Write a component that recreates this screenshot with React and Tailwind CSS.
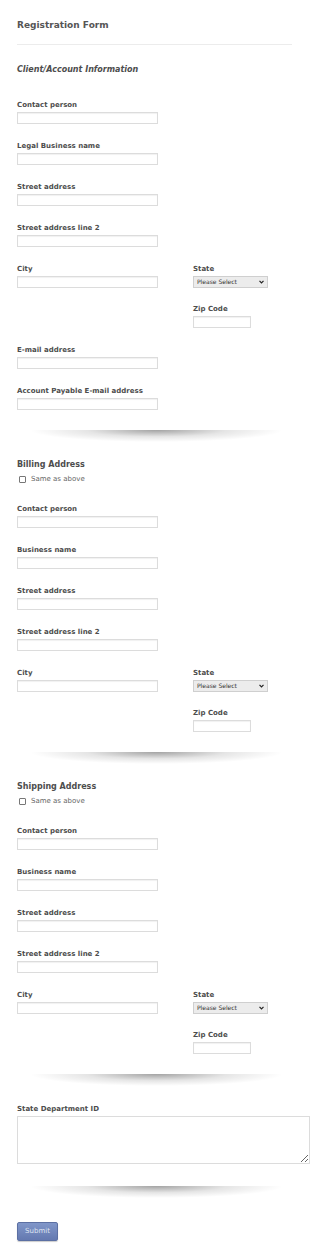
import React from 'react';

const font = { fontFamily: '"DejaVu Sans", Verdana, sans-serif' };

const Label = ({ children }) => (
  <div className="h-[10px] leading-[10px] text-[7px] font-bold text-[#4d4d4d] whitespace-nowrap mb-[2px]">{children}</div>
);

const TextInput = ({ w = 'w-[141px]' }) => (
  <input type="text" className={`block ${w} h-[12px] border border-[#dcdcdc] bg-white shadow-[inset_0_1px_1px_rgba(0,0,0,0.06)] outline-none`} />
);

const Field = ({ label, mb = 'mb-[17px]' }) => (
  <div className={mb}>
    <Label>{label}</Label>
    <TextInput />
  </div>
);

const StateSelect = () => (
  <div className="relative w-[75px] h-[12px]">
    <select className="appearance-none block w-full h-full border border-[#cfcfcf] bg-[#ececec] text-[6px] leading-[10px] text-[#333] pl-[3px] outline-none">
      <option>Please Select</option>
    </select>
    <svg className="absolute right-[4px] top-[4px] pointer-events-none" width="5" height="4" viewBox="0 0 5 4">
      <path d="M0.5 0.8 L2.5 2.8 L4.5 0.8" fill="none" stroke="#222" strokeWidth="1.2" />
    </svg>
  </div>
);

const CityRow = () => (
  <div className="grid grid-cols-[176px_1fr]">
    <div>
      <Label>City</Label>
      <TextInput />
    </div>
    <div>
      <Label>State</Label>
      <StateSelect />
      <div className="mt-[16px]">
        <Label>Zip Code</Label>
        <TextInput w="w-[58px]" />
      </div>
    </div>
  </div>
);

const Divider = () => (
  <div className="ml-[13px] w-[253px] h-[12px] bg-[radial-gradient(ellipse_50%_100%_at_50%_0%,rgba(0,0,0,0.36),rgba(0,0,0,0.1)_55%,transparent_100%)]" />
);

const SameAsAbove = () => (
  <label className="flex items-center h-[11px] ml-[2px] text-[7px] text-[#666]">
    <span className="w-[7px] h-[7px] border border-[#777] rounded-[1px] bg-white mr-[5px]" />
    Same as above
  </label>
);

const AddressSection = ({ title }) => (
  <>
    <div className="mt-[17px] h-[12px] leading-[12px] text-[8px] font-bold text-[#4d4d4d]">{title}</div>
    <div className="mt-[3px]">
      <SameAsAbove />
    </div>
    <div className="mt-[19px]">
      <Field label="Contact person" />
      <Field label="Business name" />
      <Field label="Street address" />
      <Field label="Street address line 2" />
      <CityRow />
    </div>
    <div className="mt-[20px]">
      <Divider />
    </div>
  </>
);

export default function App() {
  return (
    <div className="bg-white w-[310px] overflow-hidden px-[17px] pt-[19px] pb-[13px]" style={font}>
      <h1 className="h-[12px] leading-[12px] text-[9px] font-bold text-[#555]">Registration Form</h1>
      <div className="mt-[13px] w-[275px] border-t border-[#ececec]" />
      <h2 className="mt-[19px] h-[12px] leading-[12px] text-[8px] font-bold italic text-[#4d4d4d]">Client/Account Information</h2>

      <div className="mt-[24px]">
        <Field label="Contact person" />
        <Field label="Legal Business name" />
        <Field label="Street address" />
        <Field label="Street address line 2" />
        <CityRow />
        <div className="mt-[17px]">
          <Field label="E-mail address" />
          <Field label="Account Payable E-mail address" mb="mb-0" />
        </div>
      </div>

      <div className="mt-[20px]">
        <Divider />
      </div>

      <AddressSection title="Billing Address" />
      <AddressSection title="Shipping Address" />

      <div className="mt-[18px]">
        <Label>State Department ID</Label>
        <textarea className="block w-[293px] h-[48px] border border-[#dcdcdc] bg-white outline-none resize" />
      </div>

      <div className="mt-[22px]">
        <Divider />
      </div>

      <button className="mt-[24px] w-[41px] h-[19px] rounded-[2px] border border-[#5c70a3] bg-[linear-gradient(#8096c9,#6479b0)] text-[7px] text-[#dde3f0] shadow-[0_1px_1px_rgba(0,0,0,0.2)]">
        Submit
      </button>
    </div>
  );
}
